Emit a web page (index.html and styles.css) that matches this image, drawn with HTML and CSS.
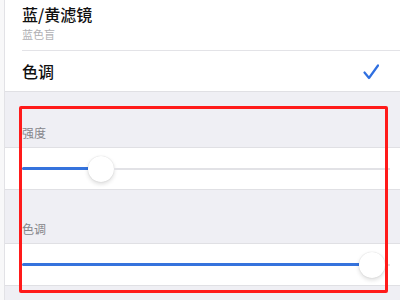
FILE: index.html
```html
<!DOCTYPE html>
<html lang="zh">
<head>
<meta charset="utf-8">
<link rel="stylesheet" href="styles.css">
</head>
<body>
<div class="page">
  <div class="group">
    <div class="row row-filter">
      <div class="title">蓝/黄滤镜</div>
      <div class="subtitle">蓝色盲</div>
    </div>
    <div class="row row-tone">
      <div class="title">色调</div>
      <svg class="check" width="16" height="16" viewBox="0 0 16 16"><polyline points="1.5,8.5 6,14 15,1.5" fill="none" stroke="#2f6fe0" stroke-width="2.2" stroke-linecap="round" stroke-linejoin="round"/></svg>
    </div>
  </div>
  <div class="header h1">强度</div>
  <div class="slider-row">
    <div class="fill" style="width:66px"></div>
    <div class="thumb"></div>
    <div class="rest"></div>
  </div>
  <div class="header h2">色调</div>
  <div class="slider-row">
    <div class="fill" style="width:337px"></div>
    <div class="thumb"></div>
    <div class="rest"></div>
  </div>
</div>
<div class="highlight"></div>
</body>
</html>
```
FILE: styles.css
```css
html {
  background: #f8f8f9;
}
body {
  margin: 0;
  height: 300px;
  overflow: hidden;
  font-family: "Noto Sans CJK SC", "Noto Sans", sans-serif;
  position: relative;
}
.page {
  margin-left: 4px;
  border-left: 1px solid #e2e2e6;
  background: #efeff4;
  height: 300px;
}
.group {
  background: #fff;
  border-bottom: 1px solid #e0e0e4;
}
.row {
  margin-left: 17px;
}
.row-filter {
  padding-top: 4px;
  padding-bottom: 9px;
  border-bottom: 1px solid #e3e3e7;
}
.title {
  font-size: 16px;
  line-height: 21px;
  font-weight: 500;
  color: #111;
}
.subtitle {
  margin-top: 3px;
  font-size: 11px;
  line-height: 13px;
  color: #b0b0b4;
}
.row-tone {
  height: 40px;
  display: flex;
  align-items: center;
  justify-content: space-between;
  padding-right: 21px;
}
.check {
  display: block;
  margin-top: 2px;
}
.header {
  padding-left: 17px;
  font-size: 12px;
  line-height: 16px;
  color: #86868b;
  padding-bottom: 6px;
}
.h1 {
  padding-top: 33px;
}
.h2 {
  padding-top: 31px;
}
.slider-row {
  background: #fff;
  border-top: 1px solid #e0e0e4;
  border-bottom: 1px solid #e0e0e4;
  height: 41px;
  display: flex;
  align-items: center;
  padding-left: 17px;
  padding-right: 10px;
}
.fill {
  height: 3px;
  background: #3573dd;
  border-radius: 2px 0 0 2px;
}
.thumb {
  width: 26px;
  height: 26px;
  border-radius: 50%;
  background: #fff;
  box-shadow: 0 2px 4px rgba(0, 0, 0, 0.14), 0 0 1px rgba(0, 0, 0, 0.18);
  flex: none;
}
.rest {
  flex: 1;
  height: 2px;
  background: #e2e2e6;
}
.highlight {
  position: absolute;
  left: 19px;
  top: 106px;
  width: 363px;
  height: 181px;
  border: 3px solid #ff1a1a;
  border-radius: 2px;
}
```
